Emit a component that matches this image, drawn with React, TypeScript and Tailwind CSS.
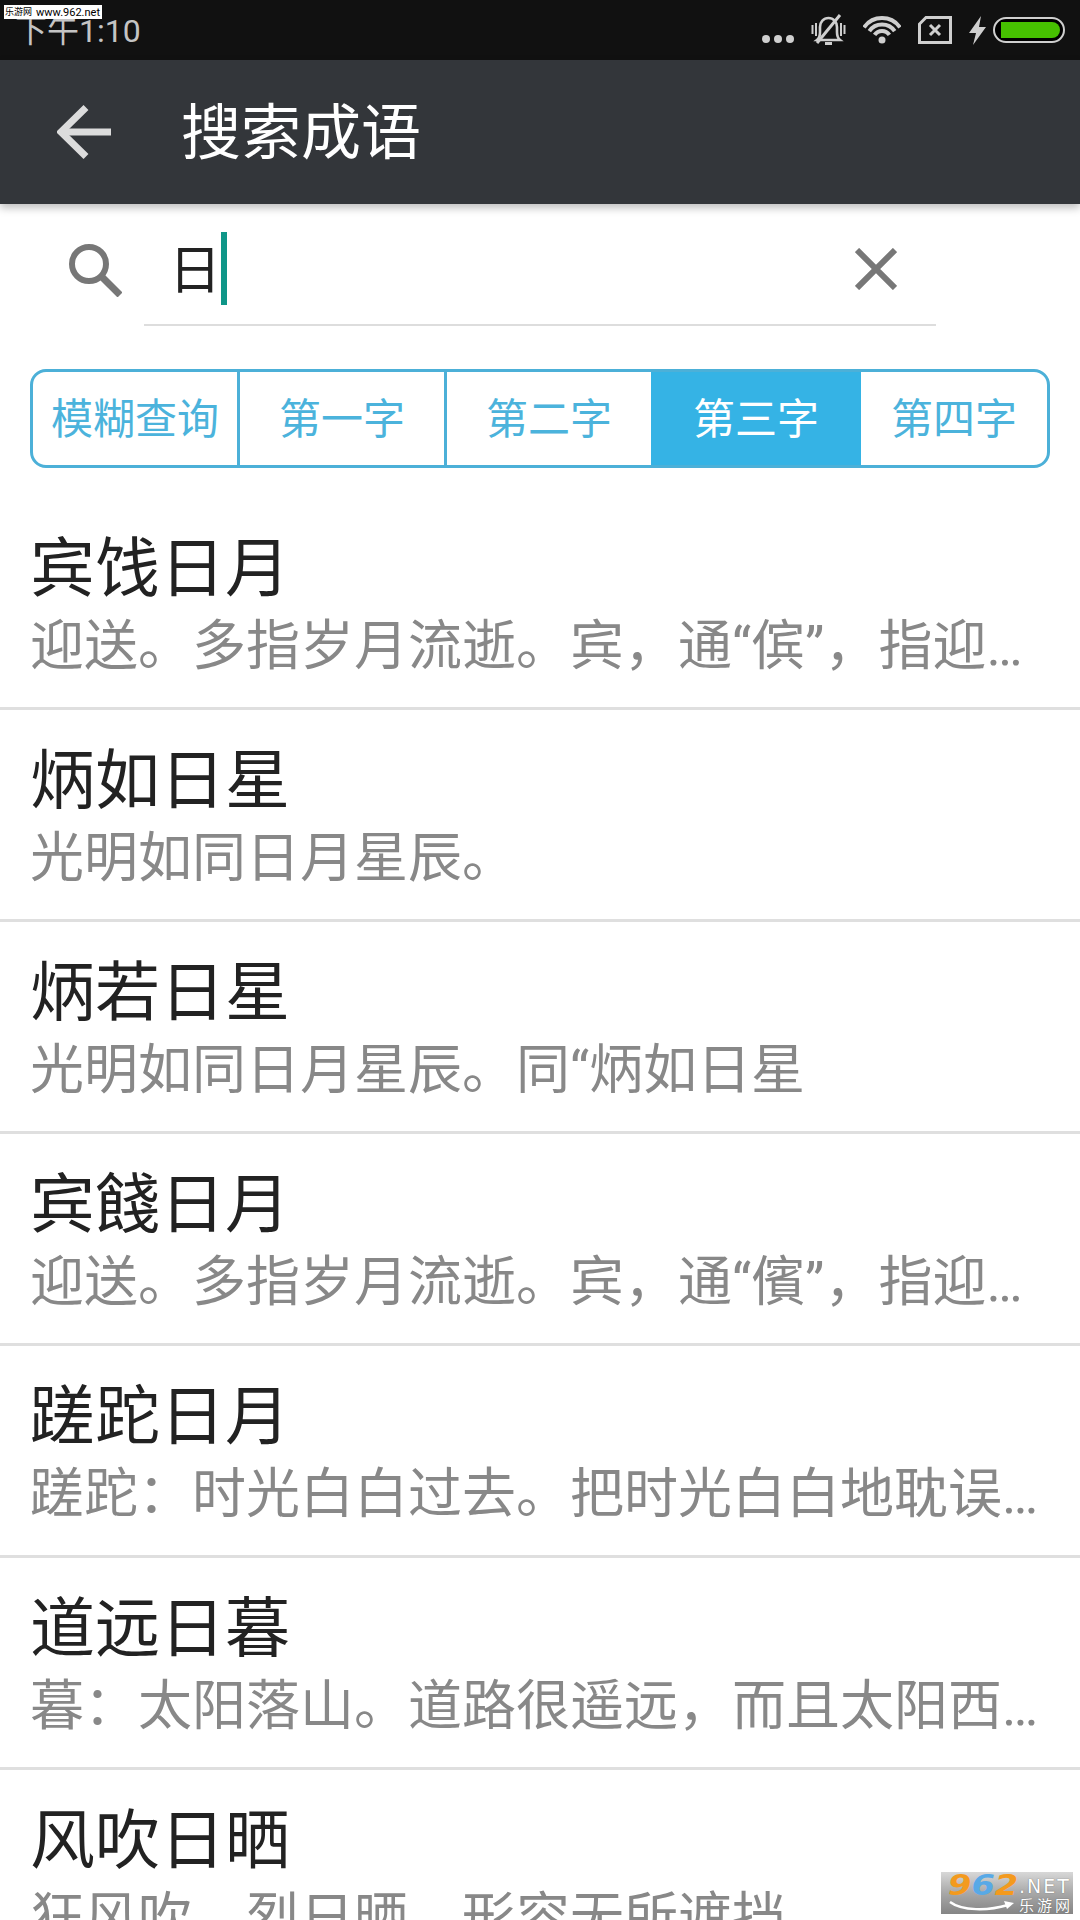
const rows = [
  { title: '宾饯日月', desc: '迎送。多指岁月流逝。宾，通“傧”，指迎…' },
  { title: '炳如日星', desc: '光明如同日月星辰。' },
  { title: '炳若日星', desc: '光明如同日月星辰。同“炳如日星' },
  { title: '宾餞日月', desc: '迎送。多指岁月流逝。宾，通“儐”，指迎…' },
  { title: '蹉跎日月', desc: '蹉跎：时光白白过去。把时光白白地耽误…' },
  { title: '道远日暮', desc: '暮：太阳落山。道路很遥远，而且太阳西…' },
  { title: '风吹日晒', desc: '狂风吹，烈日晒。形容无所遮挡' },
];

const tabs = [
  { label: '模糊查询', width: 'w-[207px]' },
  { label: '第一字', width: 'w-[207px]' },
  { label: '第二字', width: 'w-[204px]' },
  { label: '第三字', width: 'w-[210px]', active: true },
  { label: '第四字', width: 'flex-1' },
];

function StatusIcons() {
  return (
    <div className="flex items-center gap-[17px] text-[#cfcfcf]">
      <svg width="32" height="8" viewBox="0 0 32 8" className="mt-[18px]" fill="currentColor">
        <circle cx="4" cy="4" r="4" />
        <circle cx="16" cy="4" r="4" />
        <circle cx="28" cy="4" r="4" />
      </svg>
      <svg width="35" height="32" viewBox="0 0 35 32" fill="none" stroke="currentColor" strokeWidth="2.6">
        <path d="M6 26c2.500-2 3-4 3-8v-5c0-5 3.500-9 8.500-9s8.500 4 8.500 9v5c0 4 .5 6 3 8z" />
        <path d="M14 29.500h7" strokeWidth="3" />
        <path d="M1.500 11v9M5 9v13M30 9v13M33.500 11v9" strokeWidth="2" />
        <path d="M6 29L29 1" strokeWidth="3" />
      </svg>
      <svg width="38" height="28" viewBox="0 0 38 28" fill="none" stroke="currentColor" strokeWidth="4">
        <path d="M1 11.400A22 22 0 0 1 37 11.400" />
        <path d="M6.300 15.100A15.500 15.500 0 0 1 31.700 15.100" />
        <path d="M11.600 18.800A9 9 0 0 1 26.400 18.800" />
        <circle cx="19" cy="24" r="3.500" fill="currentColor" stroke="none" />
      </svg>
      <svg width="34" height="28" viewBox="0 0 34 28" fill="none" stroke="currentColor" strokeWidth="3">
        <path d="M8 1.500H32.500V26.500H1.500V8z" />
        <path d="M12 9l10 10M22 9L12 19" />
      </svg>
      <div className="flex items-center gap-[7px]">
        <svg width="17" height="29" viewBox="0 0 17 29" fill="currentColor">
          <path d="M12 0L0 17H7L4 29L17 11H10z" />
        </svg>
        <div className="w-[72px] h-[26px] rounded-full border-2 border-[#cfcfcf] bg-black p-[3px] pl-[6px]">
          <div className="w-full h-full bg-[#46c000] rounded-l-[3px] rounded-r-full" />
        </div>
      </div>
    </div>
  );
}

function SiteBadge() {
  return (
    <div className="absolute left-[941px] top-[1872px] w-[132px] h-[42px] bg-gradient-to-b from-[#d8d8d8] via-[#a8a8a8] to-[#858585] pl-[7px] pt-[2px] overflow-hidden">
      <div className="flex items-start h-[24px]">
        <span className="inline-block w-[70px] shrink-0 origin-left scale-x-[1.2] text-[28px] leading-[24px] font-bold italic font-['DejaVu_Sans',sans-serif] text-[#f39a1e]">
          9<span className="text-[#58a9e6]">6</span>2
        </span>
        <span className="ml-[1px] mt-[3px] text-[19px] leading-[18px] tracking-[2px] text-white font-['DejaVu_Sans',sans-serif] [text-shadow:0_0_1px_#555555]">.NET</span>
      </div>
      <div className="flex items-center">
        <svg width="70" height="16" viewBox="0 0 70 16" fill="none" stroke="#ffffff" strokeWidth="2.500">
          <path d="M2 4c12 9 38 9 58 3" />
          <path d="M56 3l10 2-7 6z" fill="#ffffff" stroke="none" />
        </svg>
        <span className="ml-[1px] text-[15px] leading-[16px] tracking-[3px] text-white [text-shadow:0_0_1px_#555555]">乐游网</span>
      </div>
    </div>
  );
}

export default function App() {
  return (
    <div className="relative w-[1080px] h-[1920px] overflow-hidden bg-white font-['Roboto','Noto_Sans_CJK_SC',sans-serif]">
      <div className="h-[60px] bg-[#111111] flex items-center justify-between pl-[15px] pr-[15px]">
        <span className="text-[32px] leading-[60px] text-[#c4c4c4] pt-[1px]">下午1:10</span>
        <StatusIcons />
      </div>

      <div className="relative z-10 h-[144px] bg-[#33363a] flex items-center pl-[57px] shadow-[0_4px_8px_rgba(0,0,0,0.25)]">
        <svg width="54" height="54" viewBox="0 0 54 54" fill="none" stroke="#dcdcdc" strokeWidth="7">
          <path d="M54 27H4" />
          <path d="M29 2.500L4 27l25 24.500" />
        </svg>
        <h1 className="ml-[70px] pt-[4px] text-[60px] leading-[140px] font-normal text-white">搜索成语</h1>
      </div>

      <div className="flex pl-[69px]">
        <svg width="53" height="53" viewBox="0 0 53 53" className="mt-[40px] shrink-0" fill="none" stroke="#777777" strokeWidth="6">
          <circle cx="20" cy="20" r="17" />
          <path d="M32 32l19 19" strokeWidth="7" />
        </svg>
        <div className="ml-[22px] w-[792px] h-[122px] pt-[12px] border-b-2 border-[#dddddd] flex items-center pl-[25px] pr-[39px]">
          <span className="text-[52px] leading-none text-[#222222] mt-[3px]">日</span>
          <span className="w-[6px] h-[73px] bg-[#0f9688] mt-[-3px]" />
          <svg width="42" height="42" viewBox="0 0 42 42" className="ml-auto mt-[-3px]" fill="none" stroke="#777777" strokeWidth="6">
            <path d="M2 2l38 38M40 2L2 40" />
          </svg>
        </div>
      </div>

      <div className="mx-[30px] mt-[43px] h-[99px] flex rounded-[16px] border-[3px] border-[#4cb0d8] overflow-hidden">
        {tabs.map((tab, i) => (
          <div
            key={tab.label}
            className={`${tab.width} flex items-center justify-center pt-[3px] text-[42px] leading-none ${
              tab.active ? 'bg-[#35b3e5] text-white' : 'text-[#4bb3dc]'
            } ${i < 2 ? 'border-r-[3px] border-[#4cb0d8]' : ''}`}
          >
            {tab.label}
          </div>
        ))}
      </div>

      <div className="mt-[30px]">
        {rows.map((row) => (
          <div key={row.title} className="h-[212px] pt-[33px] pl-[30px] border-b-[3px] border-[#dfdfdf]">
            <div className="text-[65px] leading-[76px] text-[#222222]">{row.title}</div>
            <div className="pt-[1px] text-[54px] leading-[78px] text-[#888888] whitespace-nowrap">{row.desc}</div>
          </div>
        ))}
      </div>

      <div className="absolute left-[4px] top-[5px] w-[98px] h-[14px] bg-white flex items-center pl-[1px] leading-none text-black whitespace-nowrap">
        <span className="text-[9px]">乐游网</span>
        <span className="ml-[4px] text-[11px]">www.962.net</span>
      </div>

      <SiteBadge />
    </div>
  );
}
